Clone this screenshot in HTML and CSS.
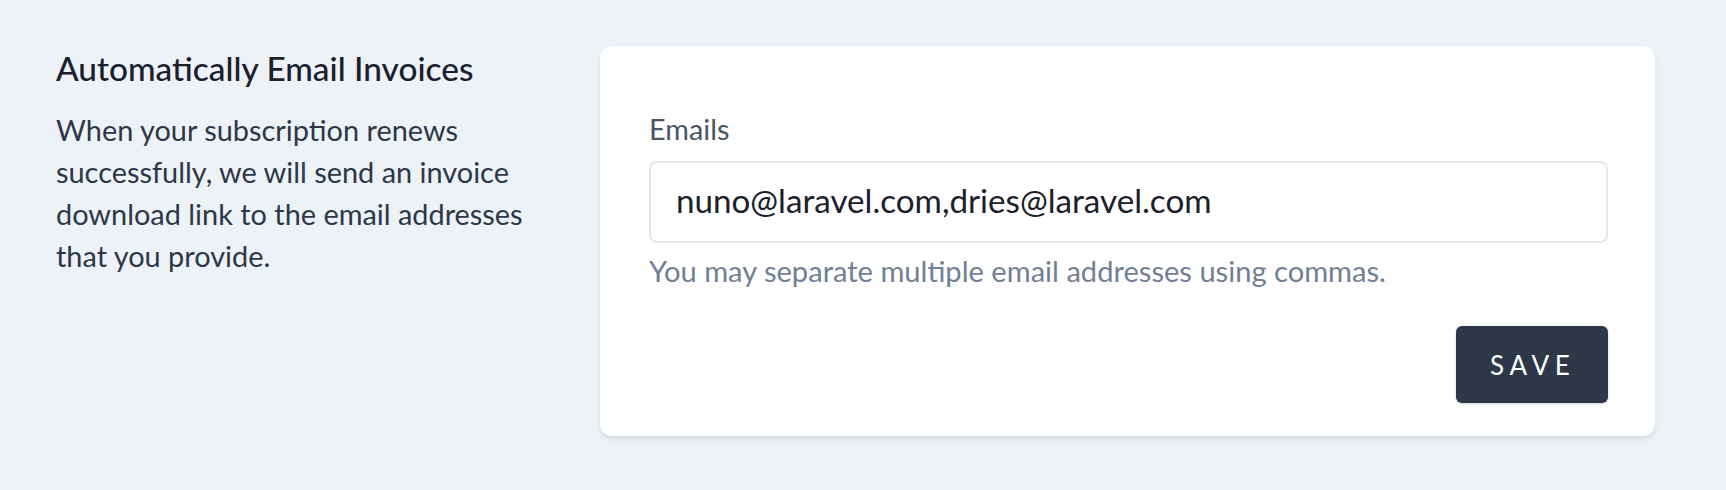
FILE: index.html
```html
<!DOCTYPE html>
<html lang="en">
<head>
<meta charset="utf-8">
<title>Automatically Email Invoices</title>
<link rel="stylesheet" href="styles.css">
</head>
<body>
<div class="section">
  <div class="aside">
    <h3 class="title">Automatically Email Invoices</h3>
    <p class="desc">When your subscription renews successfully, we will send an invoice download link to the email addresses that you provide.</p>
  </div>
  <form class="card">
    <label class="label" for="emails">Emails</label>
    <input class="input" id="emails" type="text" value="nuno@laravel.com,dries@laravel.com">
    <p class="help">You may separate multiple email addresses using commas.</p>
    <div class="actions">
      <button class="btn" type="button">Save</button>
    </div>
  </form>
</div>
</body>
</html>
```

FILE: styles.css
```css
html, body {
  margin: 0;
  padding: 0;
}
body {
  background: #edf2f7;
  font-family: "Lato", "Noto Sans", sans-serif;
  height: 490px;
}
.section {
  display: grid;
  grid-template-columns: 502px 1055px;
  column-gap: 42px;
  padding: 46px 0 0 56px;
}
.title {
  margin: -2px 0 0;
  font-size: 33.4px;
  line-height: 49px;
  font-weight: 500;
  color: #1a202c;
}
.desc {
  margin: 16px 0 0;
  font-size: 28.9px;
  line-height: 42px;
  color: #2d3748;
}
.card {
  background: #fff;
  border-radius: 12px;
  padding: 62px 47px 33px 49px;
  box-shadow: 0 4px 10px -2px rgba(0,0,0,0.10), 0 2px 4px -1px rgba(0,0,0,0.06);
  display: flex;
  flex-direction: column;
  height: 390px;
  box-sizing: border-box;
}
.label {
  font-size: 28.8px;
  line-height: 42px;
  color: #4a5568;
}
.input {
  margin-top: 11px;
  height: 82px;
  box-sizing: border-box;
  border: 2px solid #e2e8f0;
  border-radius: 8px;
  padding: 0 25px 4px;
  font-family: inherit;
  font-size: 33.2px;
  color: #1a202c;
  background: #fff;
  outline: none;
}
.help {
  margin: 7px 0 0;
  font-size: 29.1px;
  line-height: 42px;
  color: #718096;
}
.actions {
  display: flex;
  justify-content: flex-end;
  margin-top: 34px;
}
.btn {
  height: 77px;
  width: 152px;
  border: 0;
  border-radius: 6px;
  background: #2d3748;
  color: #fff;
  font-family: inherit;
  font-size: 26px;
  letter-spacing: 0.22em;
  text-transform: uppercase;
  padding: 0 0 0 1.5px;
  box-shadow: 0 1px 3px rgba(0,0,0,0.12), 0 1px 2px rgba(0,0,0,0.08);
  cursor: pointer;
}
```
